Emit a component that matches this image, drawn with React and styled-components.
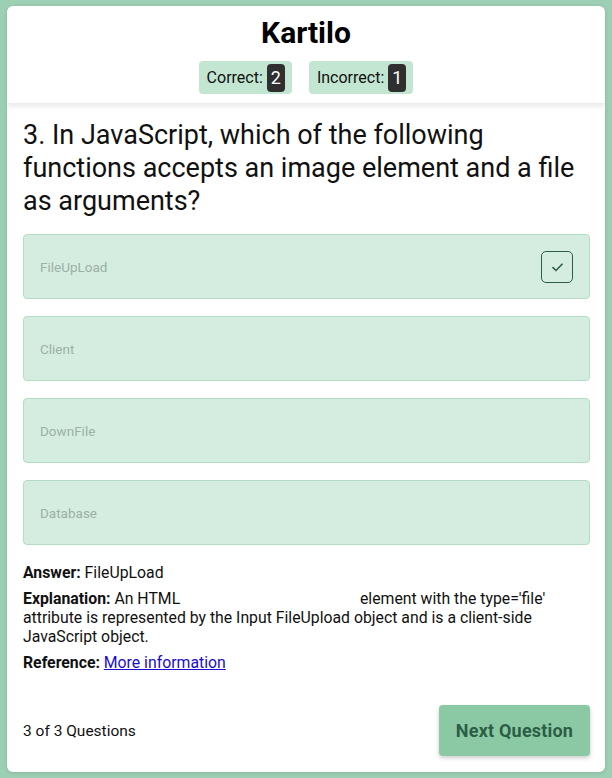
import React from 'react'
import styled, { createGlobalStyle } from 'styled-components'

const GREEN_BG = '#9dcfb4'
const OPTION_BG = '#d5ede0'
const DARK_GREEN = '#2b5e44'

const GlobalStyle = createGlobalStyle`
    body {
        margin: 0;
        background: ${GREEN_BG};
        font-family: Roboto, "Liberation Sans", sans-serif;
        color: #111;
    }
`

const Card = styled.div`
    margin: 6px 7px;
    height: 766px;
    background: #fff;
    border-radius: 6px;
    display: flex;
    flex-direction: column;
    overflow: hidden;
    box-shadow: 0 1px 4px rgba(0, 0, 0, 0.12);
`

const Header = styled.header`
    height: 97px;
    box-sizing: border-box;
    padding-top: 11px;
    display: flex;
    flex-direction: column;
    align-items: center;
    box-shadow: 0 3px 6px rgba(0, 0, 0, 0.1);
    position: relative;
    z-index: 1;
`

const Title = styled.h1`
    margin: 0;
    font-size: 30px;
    line-height: 32px;
    font-weight: 700;
    color: #000;
`

const Scores = styled.div`
    display: flex;
    gap: 17px;
    margin-top: 12px;
`

const Badge = styled.div`
    display: flex;
    align-items: center;
    gap: 4px;
    height: 33px;
    padding: 0 7px 0 8px;
    background: #c2e6d1;
    border-radius: 4px;
    font-size: 16px;
`

const Count = styled.span`
    background: #2f2f2f;
    color: #fff;
    border-radius: 4px;
    padding: 0 4px;
    height: 28px;
    display: flex;
    align-items: center;
    font-size: 18px;
`

const Body = styled.main`
    flex: 1;
    padding: 16px 15px 16px 16px;
    display: flex;
    flex-direction: column;
`

const Question = styled.h2`
    margin: 0 0 16px;
    font-size: 27px;
    line-height: 33px;
    font-weight: 400;
`

const Options = styled.div`
    display: flex;
    flex-direction: column;
    gap: 17px;
`

const Option = styled.div`
    height: 65px;
    box-sizing: border-box;
    background: ${OPTION_BG};
    border: 1px solid #b3dcc5;
    border-radius: 4px;
    display: flex;
    align-items: center;
    justify-content: space-between;
    padding: 0 16px;
    font-size: 13.5px;
    color: #9cb0a4;
`

const Check = styled.span`
    width: 32px;
    height: 32px;
    box-sizing: border-box;
    border: 1px solid ${DARK_GREEN};
    border-radius: 5px;
    display: flex;
    align-items: center;
    justify-content: center;
`

const Info = styled.div`
    margin-top: 18px;
    font-size: 15.8px;
    line-height: 19px;
    display: flex;
    flex-direction: column;
    gap: 7px;
`

const Line = styled.p`
    margin: 0;
`

const Link = styled.a`
    color: #1a0dcc;
`

const Gap = styled.span`
    display: inline-block;
    width: 172px;
`

const Footer = styled.footer`
    margin-top: auto;
    display: flex;
    align-items: center;
    justify-content: space-between;
`

const Progress = styled.span`
    font-size: 15.5px;
`

const NextButton = styled.button`
    width: 151px;
    height: 51px;
    border: none;
    border-radius: 4px;
    background: #8bc9a5;
    color: ${DARK_GREEN};
    font-family: Roboto, sans-serif;
    font-weight: 700;
    font-size: 18px;
    letter-spacing: 0.2px;
    box-shadow: 0 2px 4px rgba(0, 0, 0, 0.2);
`

const options = ['FileUpLoad', 'Client', 'DownFile', 'Database']

const App = () => {
    return (
        <>
            <GlobalStyle />
            <Card>
                <Header>
                    <Title>Kartilo</Title>
                    <Scores>
                        <Badge>Correct: <Count>2</Count></Badge>
                        <Badge>Incorrect: <Count>1</Count></Badge>
                    </Scores>
                </Header>
                <Body>
                    <Question>3. In JavaScript, which of the following functions accepts an image element and a file as arguments?</Question>
                    <Options>
                        {options.map((opt, index) => (
                            <Option key={opt}>
                                {opt}
                                {index === 0 && (
                                    <Check>
                                        <svg width="13" height="10" viewBox="0 0 13 10" fill="none">
                                            <path d="M1.5 5.2 L5 8.5 L11.5 1.8" stroke={DARK_GREEN} strokeWidth="1.6" />
                                        </svg>
                                    </Check>
                                )}
                            </Option>
                        ))}
                    </Options>
                    <Info>
                        <Line><b>Answer:</b> FileUpLoad</Line>
                        <Line>
                            <b>Explanation:</b> An HTML <Gap /> element with the type='file' attribute is represented by the Input FileUpload object and is a client-side JavaScript object.
                        </Line>
                        <Line><b>Reference:</b> <Link href="#">More information</Link></Line>
                    </Info>
                    <Footer>
                        <Progress>3 of 3 Questions</Progress>
                        <NextButton>Next Question</NextButton>
                    </Footer>
                </Body>
            </Card>
        </>
    )
}

export default App
